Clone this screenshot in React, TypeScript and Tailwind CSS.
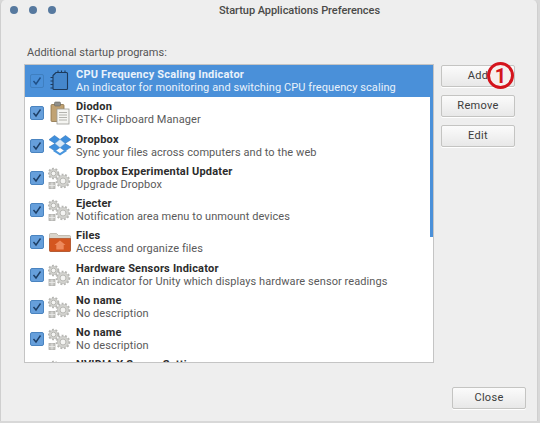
import React from 'react';

const font = { fontFamily: 'Roboto, "Open Sans", sans-serif' };

const Gear = ({ cx, cy, r }: { cx: number; cy: number; r: number }) => (
  <g>
    <circle cx={cx} cy={cy} r={r - 0.6} fill="none" stroke="#b6b6b2" strokeWidth="1.8" strokeDasharray="1.9 1.6" />
    <circle cx={cx} cy={cy} r={r - 1.4} fill="#d2d2ce" stroke="#b2b2ae" strokeWidth="0.6" />
    <circle cx={cx} cy={cy} r={r * 0.42} fill="#f4f4f2" stroke="#acaca8" strokeWidth="0.8" />
  </g>
);

const GearsIcon = () => (
  <svg width="24" height="24" viewBox="0 0 24 24">
    <Gear cx={5.5} cy={7.5} r={5.5} />
    <Gear cx={15} cy={15} r={7} />
    <rect x="1" y="16.5" width="6" height="6" fill="#c4c4c0" stroke="#acaca8" strokeWidth="0.8" />
    <path d="M1 19.5h6M4 16.5v6" stroke="#eeeeec" strokeWidth="0.8" />
  </svg>
);

const ChipIcon = () => (
  <svg width="24" height="24" viewBox="0 0 24 24" fill="none" stroke="#1d3a5c" strokeWidth="1.1">
    <path d="M5 6.5 8 3.5h10.5a1 1 0 0 1 1 1v15a1 1 0 0 1-1 1H6a1 1 0 0 1-1-1Z" fill="#4587cc" />
    <path d="M2.5 8.5H5M2.5 12H5M2.5 15.5H5M2.5 19H5M10 1.5v2M13.5 1.5v2M17 1.5v2" />
  </svg>
);

const ClipboardIcon = () => (
  <svg width="24" height="24" viewBox="0 0 24 24">
    <rect x="3" y="3.5" width="13" height="17" rx="1" fill="#c0a273" stroke="#8a7148" strokeWidth="0.8" />
    <rect x="6.5" y="1" width="6" height="4" rx="1" fill="#8f8f8b" stroke="#66665f" strokeWidth="0.6" />
    <rect x="9" y="8" width="12" height="15" fill="#f5f5f2" stroke="#9c9c96" strokeWidth="0.8" />
    <path d="M11 11.5h8M11 14h8M11 16.5h8M11 19h8" stroke="#a2a29c" strokeWidth="0.8" />
  </svg>
);

const DropboxIcon = () => (
  <svg width="24" height="24" viewBox="0 0 24 24">
    <path d="M6.5 1.5 12 5.5 7 9.5 1 5.7Z M17.5 1.5 12 5.5l5 4 6-3.8Z M7 9.5l5 4-5 3.6-6-4Z M17 9.5l-5 4 5 3.6 6-4Z" fill="#3f8fdc" stroke="#2a6cb0" strokeWidth="0.5" />
    <path d="M7 9.5l5-4 5 4-5 4Z" fill="#d8e9f8" stroke="#7fb2e2" strokeWidth="0.5" />
    <path d="M5 17 12 21.5l7-4.500-2-1.300-5 3.200-5-3.200Z" fill="#4a97df" />
  </svg>
);

const FolderIcon = () => (
  <svg width="24" height="24" viewBox="0 0 24 24">
    <path d="M1.5 4.5a1 1 0 0 1 1-1h6l2 2h11a1 1 0 0 1 1 1v14a1 1 0 0 1-1 1h-19a1 1 0 0 1-1-1Z" fill="#d9d4ca" stroke="#a89f90" strokeWidth="0.6" />
    <path d="M1.5 8.5h21v12a1 1 0 0 1-1 1h-19a1 1 0 0 1-1-1Z" fill="#d4561f" stroke="#a83f14" strokeWidth="0.6" />
    <path d="M12 10.5l5.5 4.500h-1.800v4.500h-7.400V15H6.500Z" fill="#ee8a5c" />
  </svg>
);

const CheckBox = ({ selected }: { selected: boolean }) => (
  <div
    className={`flex h-[14px] w-[14px] flex-none items-center justify-center rounded-[2px] border ${
      selected ? 'border-[#3f7fc0] bg-[#4a90d9]' : 'border-[#4a84c0] bg-[#669fdb]'
    }`}
  >
    <svg width="12" height="12" viewBox="0 0 12 12" fill="none">
      <path d="M2.5 6 5 9l4.500-6.500" stroke={selected ? '#1f4f86' : '#1e3f66'} strokeWidth="1.4" />
    </svg>
  </div>
);

type Row = { icon: React.ReactNode; name: string; desc: string };

const rows: Row[] = [
  { icon: <ChipIcon />, name: 'CPU Frequency Scaling Indicator', desc: 'An indicator for monitoring and switching CPU frequency scaling' },
  { icon: <ClipboardIcon />, name: 'Diodon', desc: 'GTK+ Clipboard Manager' },
  { icon: <DropboxIcon />, name: 'Dropbox', desc: 'Sync your files across computers and to the web' },
  { icon: <GearsIcon />, name: 'Dropbox Experimental Updater', desc: 'Upgrade Dropbox' },
  { icon: <GearsIcon />, name: 'Ejecter', desc: 'Notification area menu to unmount devices' },
  { icon: <FolderIcon />, name: 'Files', desc: 'Access and organize files' },
  { icon: <GearsIcon />, name: 'Hardware Sensors Indicator', desc: 'An indicator for Unity which displays hardware sensor readings' },
  { icon: <GearsIcon />, name: 'No name', desc: 'No description' },
  { icon: <GearsIcon />, name: 'No name', desc: 'No description' },
  { icon: <GearsIcon />, name: 'NVIDIA X Server Settings', desc: 'Configure the NVIDIA graphics driver' },
];

const Button = ({ label }: { label: string }) => (
  <div className="flex h-[22px] w-[74px] items-center justify-center rounded-[2px] border border-[#c4c4c2] bg-gradient-to-b from-[#fbfbfb] to-[#e8e8e8] text-[11px] tracking-[0.3px] text-[#3c3c3c] shadow-[0_1px_0_#ffffff]">
    {label}
  </div>
);

export default function App() {
  return (
    <div className="h-[423px] w-[540px] overflow-hidden bg-[#d8d8d8]" style={font}>
      <div className="flex h-[421px] w-[538px] flex-col rounded-t-[5px] border-l border-r border-[#cfcfcf] bg-[#eeeeee]">
        {/* Title bar */}
        <div className="flex h-[20px] flex-none items-center pl-[9px] pr-[2px]">
          <div className="flex gap-[11px]">
            <span className="h-[8px] w-[8px] rounded-full bg-[#56799f]" />
            <span className="h-[8px] w-[8px] rounded-full bg-[#56799f]" />
            <span className="h-[8px] w-[8px] rounded-full bg-[#56799f]" />
          </div>
          <div className="ml-[163px] text-[11px] font-medium leading-none tracking-[-0.05px] text-[#4a4a48]">
            Startup Applications Preferences
          </div>
        </div>

        <div className="relative flex flex-1 flex-col pl-[23px] pr-[11px]">
          <div className="ml-[3px] mt-[25px] h-[19px] text-[11px] leading-[16px] text-[#555555]">
            Additional startup programs:
          </div>

          <div className="flex flex-1 items-start">
            {/* Program list */}
            <div className="relative h-[299px] w-[410px] flex-none overflow-hidden border border-[#c4c4c4] bg-white">
              {rows.map((row, i) => (
                <div
                  key={i}
                  className={`flex h-[32.25px] items-center ${i === 0 ? 'bg-[#4a90d9]' : ''}`}
                >
                  <div className="ml-[5px] flex-none">
                    <CheckBox selected={i === 0} />
                  </div>
                  <div className="ml-[4px] w-[24px] flex-none">{row.icon}</div>
                  <div className="ml-[4px] whitespace-nowrap text-[11px] leading-[13px] tracking-[0.08px]">
                    <div className={`font-bold tracking-[0.2px] ${i === 0 ? 'text-[#e9f2fb]' : 'text-[#2c2c2c]'}`}>{row.name}</div>
                    <div className={i === 0 ? 'text-[#e9f2fb]' : 'text-[#5a5a5a]'}>{row.desc}</div>
                  </div>
                </div>
              ))}
              {/* Scrollbar thumb */}
              <div className="absolute right-0 top-0 h-[172px] w-[3px] bg-[#4a90d9]" />
            </div>

            {/* Side buttons */}
            <div className="ml-[7px] mt-px flex flex-col gap-[8px]">
              <div className="relative">
                <Button label="Add" />
                <div className="absolute left-[46px] top-[-3px] flex h-[27px] w-[27px] items-center justify-center rounded-full border-[3px] border-[#d4141c] bg-[#f6f0ee] text-[20px] font-bold leading-none text-[#d4141c]">
                  1
                </div>
              </div>
              <Button label="Remove" />
              <Button label="Edit" />
            </div>
          </div>

          <div className="flex h-[34px] flex-none justify-end">
            <Button label="Close" />
          </div>
        </div>
      </div>
    </div>
  );
}
